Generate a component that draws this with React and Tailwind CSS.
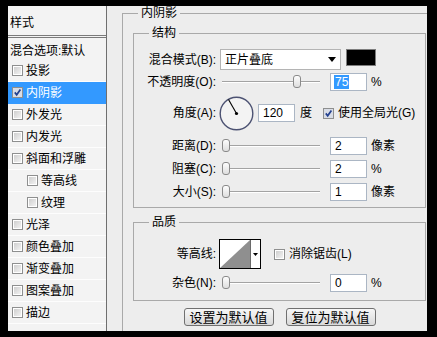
import React from 'react';

const listItems = [
  { label: '投影' },
  { label: '内阴影', checked: true, active: true },
  { label: '外发光' },
  { label: '内发光' },
  { label: '斜面和浮雕' },
  { label: '等高线', indent: true },
  { label: '纹理', indent: true },
  { label: '光泽' },
  { label: '颜色叠加' },
  { label: '渐变叠加' },
  { label: '图案叠加' },
  { label: '描边' },
];

function Check({ checked }) {
  return (
    <span className="flex h-[11px] w-[11px] shrink-0 items-center justify-center border border-[#8e8f8f] bg-white">
      {checked ? (
        <svg width="9" height="9" viewBox="0 0 9 9">
          <rect x="0" y="0" width="9" height="9" fill="#d9dde6" />
          <path d="M1.8 4.4 L3.7 6.8 L7.4 1.6" stroke="#23408f" strokeWidth="1.7" fill="none" />
        </svg>
      ) : (
        <span className="h-[7px] w-[7px] bg-gradient-to-br from-[#cfcfcf] to-[#f2f2f2]" />
      )}
    </span>
  );
}

function Slider({ pos }) {
  return (
    <div className="relative h-[18px] w-[98px] shrink-0">
      <div className="absolute left-0 right-0 top-[8px] h-px bg-[#a3a3a3]" />
      <div className="absolute left-0 right-0 top-[9px] h-px bg-white" />
      <div
        className="absolute top-[2px] h-[13px] w-[8px] rounded-[3px] border border-[#8a8a8a] bg-gradient-to-b from-[#fdfdfd] to-[#dedede]"
        style={{ left: pos }}
      />
    </div>
  );
}

function Field({ children, selected }) {
  return (
    <div className="ml-[10px] flex h-[18px] w-[37px] shrink-0 items-center border border-[#abb6c4] bg-white pl-[3px]">
      {selected ? (
        <span className="bg-[#3399ff] px-px leading-[14px] text-white">{children}</span>
      ) : (
        <span className="px-px">{children}</span>
      )}
    </div>
  );
}

function Label({ children }) {
  return <div className="w-[82px] shrink-0 text-right">{children}</div>;
}

function SliderRow({ label, pos, value, unit, selected, className }) {
  return (
    <div className={'flex h-[18px] items-center ' + className}>
      <Label>{label}</Label>
      <div className="ml-[6px]">
        <Slider pos={pos} />
      </div>
      <Field selected={selected}>{value}</Field>
      <span className="ml-[4px]">{unit}</span>
    </div>
  );
}

function Group({ title, className, children }) {
  return (
    <fieldset className={'w-[293px] border border-[#a9a9a9] ' + className}>
      <legend className="ml-[15px] px-[3px] leading-[14px]">{title}</legend>
      {children}
    </fieldset>
  );
}

function Button({ children }) {
  return (
    <button className="flex h-[18px] w-[90px] items-center justify-center rounded-[3px] border border-[#707070] bg-gradient-to-b from-[#f7f7f7] to-[#d9d9d9] text-[13px] leading-none">
      {children}
    </button>
  );
}

export default function App() {
  return (
    <div className="h-[337px] w-[437px] overflow-hidden bg-black pl-[8px] pt-[6px] font-['Liberation_Sans','Noto_Sans_CJK_SC',sans-serif] text-[12px] text-black">
      <div className="flex h-[325px] w-[419px]">
        {/* 样式列表 */}
        <div className="w-[99px] shrink-0 border-r border-[#6f6f6f] bg-[#f3f3f3]">
          <div className="flex h-[30px] items-center border-b border-[#7a7a7a] pl-[2px] pt-[5px]">样式</div>
          <div className="mt-px flex h-[23px] items-center border-t border-[#7a7a7a] pl-[2px] pt-[3px]">混合选项:默认</div>
          {listItems.map((item) => (
            <div
              key={item.label}
              className={
                'flex h-[22px] items-center gap-[3px] border-b ' +
                (item.active ? 'border-[#3399ff] bg-[#3399ff] text-white ' : 'border-[#fdfdfd] ') +
                (item.indent ? 'pl-[19px]' : 'pl-[4px]')
              }
            >
              <Check checked={item.checked} />
              <span>{item.label}</span>
            </div>
          ))}
        </div>

        {/* 内阴影设置 */}
        <div className="flex-1 overflow-hidden bg-[#ededed] pl-[15px]">
          <fieldset className="h-[340px] w-[313px] border border-[#a9a9a9] pl-[10px]">
            <legend className="ml-[5px] px-[3px] leading-[14px]">内阴影</legend>

            <Group title="结构" className="mt-[6px] pb-[6px]">
              <div className="mt-[9px] flex h-[21px] items-center">
                <Label>混合模式(B):</Label>
                <div className="ml-[4px] flex h-[21px] w-[121px] items-center justify-between border border-[#b4b4b4] bg-white pl-[4px] pr-[4px]">
                  <span>正片叠底</span>
                  <svg width="8" height="5" viewBox="0 0 8 5">
                    <path d="M0 0 H8 L4 5 Z" fill="#000" />
                  </svg>
                </div>
                <div className="ml-[5px] h-[17px] w-[30px] self-start border border-[#7d7d7d] bg-black" />
              </div>

              <SliderRow className="mt-[3px]" label="不透明度(O):" pos={71} value="75" unit="%" selected />

              <div className="mt-[5px] flex h-[34px] items-center">
                <Label>角度(A):</Label>
                <svg className="ml-[3px] shrink-0" width="35" height="35" viewBox="0 0 35 35">
                  <circle cx="17.5" cy="17.5" r="16.3" fill="#f3f3f3" stroke="#4d5373" strokeWidth="1.4" />
                  <line x1="17.5" y1="17.5" x2="9.5" y2="3.6" stroke="#000" strokeWidth="1.1" />
                  <circle cx="17.5" cy="17.5" r="1.6" fill="#000" />
                </svg>
                <div className="ml-[4px] flex h-[18px] w-[37px] shrink-0 items-center border border-[#abb6c4] bg-white pl-[4px]">120</div>
                <span className="ml-[5px]">度</span>
                <span className="ml-[11px]">
                  <Check checked />
                </span>
                <span className="ml-[4px]">使用全局光(G)</span>
              </div>

              <SliderRow className="mt-[7px]" label="距离(D):" pos={0} value="2" unit="像素" />
              <SliderRow className="mt-[5px]" label="阻塞(C):" pos={0} value="2" unit="%" />
              <SliderRow className="mt-[5px]" label="大小(S):" pos={0} value="1" unit="像素" />
            </Group>

            <Group title="品质" className="mt-[7px] pb-[8px]">
              <div className="mt-[10px] flex h-[30px] items-center">
                <Label>等高线:</Label>
                <div className="ml-[3px] flex h-[30px] w-[42px] shrink-0 border border-black bg-white">
                  <svg width="30" height="28" viewBox="0 0 30 28">
                    <path d="M0 28 L30 0 L30 28 Z" fill="#8f8f8f" />
                  </svg>
                  <div className="flex flex-1 items-center justify-center border-l border-[#6a6a6a]">
                    <svg width="5" height="3" viewBox="0 0 5 3">
                      <path d="M0 0 H5 L2.5 3 Z" fill="#000" />
                    </svg>
                  </div>
                </div>
                <span className="ml-[13px]">
                  <Check />
                </span>
                <span className="ml-[4px]">消除锯齿(L)</span>
              </div>
              <SliderRow className="mt-[5px]" label="杂色(N):" pos={0} value="0" unit="%" />
            </Group>

            <div className="mt-[7px] flex w-[293px] justify-center gap-[12px]">
              <Button>设置为默认值</Button>
              <Button>复位为默认值</Button>
            </div>
          </fieldset>
        </div>
      </div>
    </div>
  );
}
